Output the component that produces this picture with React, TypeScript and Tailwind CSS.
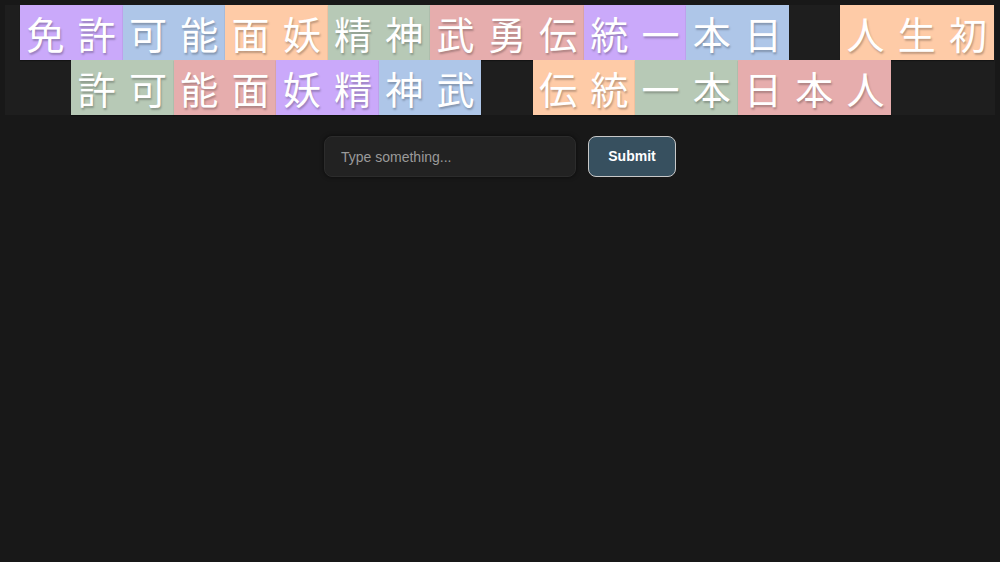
import React from "react";

type Seg = { chars: string; c: string } | { gap: number };

const P = "bg-[#caa9fa]";
const B = "bg-[#aec6e8]";
const O = "bg-[#fecba7]";
const G = "bg-[#b7c9b6]";
const K = "bg-[#e6adad]";

const row1: Seg[] = [
  { chars: "免許", c: P },
  { chars: "可能", c: B },
  { chars: "面妖", c: O },
  { chars: "精神", c: G },
  { chars: "武勇伝", c: K },
  { chars: "統一", c: P },
  { chars: "本日", c: B },
  { gap: 1 },
  { chars: "人生初", c: O },
];

const row2: Seg[] = [
  { gap: 1 },
  { chars: "許可", c: G },
  { chars: "能面", c: K },
  { chars: "妖精", c: P },
  { chars: "神武", c: B },
  { gap: 1 },
  { chars: "伝統", c: O },
  { chars: "一本", c: G },
  { chars: "日本人", c: K },
];

const CELL = 51.26;

function Row({ segs }: { segs: Seg[] }) {
  return (
    <div className="flex h-[55px]">
      {segs.map((s, i) =>
        "gap" in s ? (
          <div key={i} className="shrink-0 h-full" style={{ width: CELL * s.gap }} />
        ) : (
          <div
            key={i}
            className={`${s.c} flex shrink-0 h-full shadow-[0_1px_1px_rgba(0,0,0,0.3)]`}
          >
            {Array.from(s.chars).map((ch, j) => (
              <span
                key={j}
                className="w-[51.26px] h-full flex items-center justify-center text-white text-[38px] leading-none [text-shadow:1px_2px_2px_rgba(0,0,0,0.25)]"
              >
                {ch}
              </span>
            ))}
          </div>
        )
      )}
    </div>
  );
}

export default function App() {
  return (
    <div
      className="w-[1000px] h-[562px] bg-[#181818] overflow-hidden pt-[5px]"
      style={{ fontFamily: '"Liberation Sans", Arial, sans-serif' }}
    >
      <div
        className="ml-[5px] w-[990px] bg-[#1e1e1e] pl-[15px]"
        style={{ fontFamily: '"Noto Sans CJK JP", "Noto Sans", sans-serif' }}
      >
        <Row segs={row1} />
        <Row segs={row2} />
      </div>
      <div className="flex justify-center gap-[12px] mt-[21px]">
        <input
          type="text"
          placeholder="Type something..."
          className="w-[252px] h-[41px] rounded-[8px] bg-[#222222] border border-[#2c2c2c] px-[16px] text-[14px] text-white placeholder:text-[#9a9a9a] outline-none shadow-[0_0_4px_rgba(0,0,0,0.6)]"
        />
        <button className="w-[88px] h-[41px] rounded-[8px] bg-[#37505f] border border-[#c8c8c8] text-white font-bold text-[14px]">
          Submit
        </button>
      </div>
    </div>
  );
}
